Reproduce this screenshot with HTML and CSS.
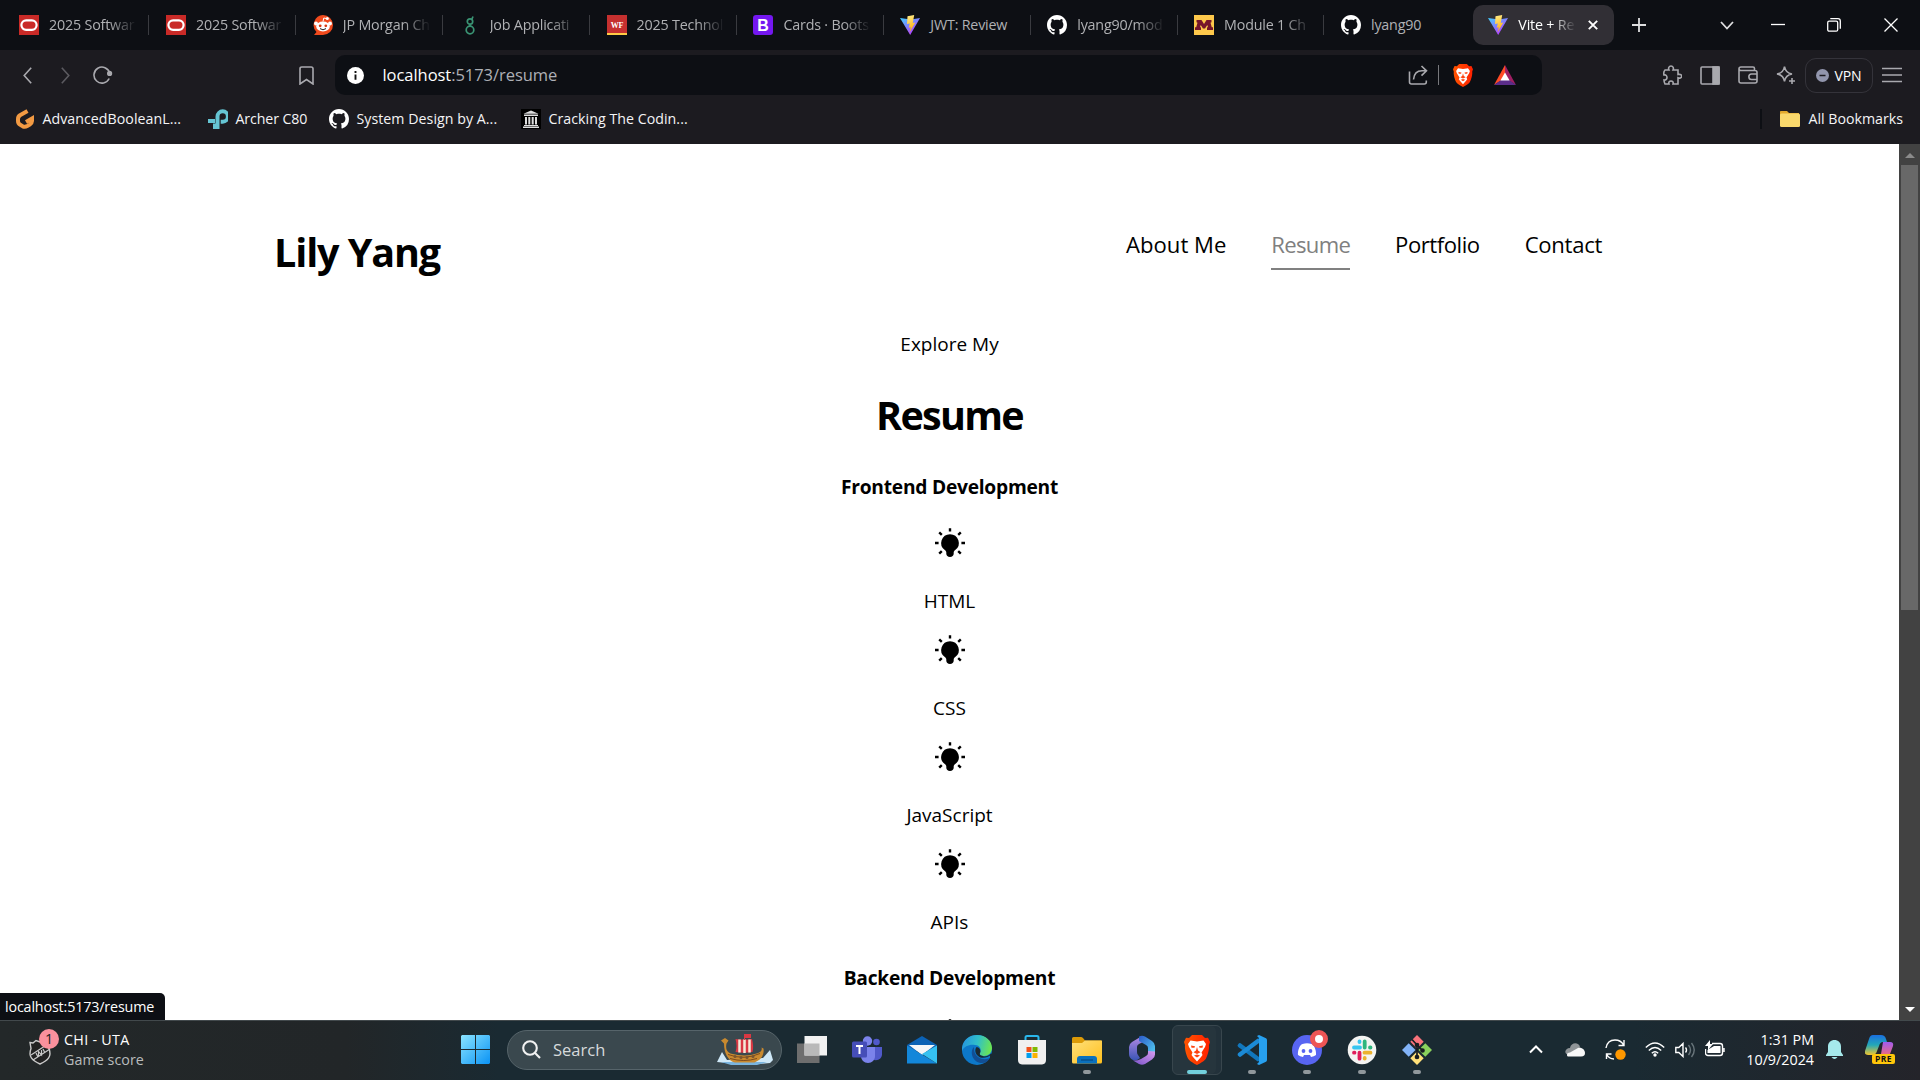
FILE: index.html
```html
<!DOCTYPE html>
<html lang="en">
<head>
<meta charset="utf-8">
<title>Vite + React</title>
<link rel="stylesheet" href="styles.css">
</head>
<body>
<svg class="defs" aria-hidden="true">
  <defs>
    <linearGradient id="vite-a" x1="0" y1="0" x2=".7" y2="1"><stop offset="0" stop-color="#41d1ff"/><stop offset="1" stop-color="#bd34fe"/></linearGradient>
    <linearGradient id="vite-b" x1=".4" y1="0" x2=".6" y2="1"><stop offset="0" stop-color="#ffea83"/><stop offset="1" stop-color="#ffa800"/></linearGradient>
    <linearGradient id="brave-g" x1="0" x2="1"><stop offset="0" stop-color="#ff5500"/><stop offset="1" stop-color="#ff2000"/></linearGradient>
    <linearGradient id="win-g" x1="0" y1="0" x2="1" y2="1" ><stop offset="0" stop-color="#8be4ff"/><stop offset="1" stop-color="#0a93f5"/></linearGradient>
    <linearGradient id="edge-a" x1="0" y1=".3" x2="1" y2=".5"><stop offset="0" stop-color="#2594e0"/><stop offset=".5" stop-color="#30bfc9"/><stop offset="1" stop-color="#6ce650"/></linearGradient>
    <linearGradient id="m-a" x1="0" y1="0" x2="0" y2="1"><stop offset="0" stop-color="#b58ae6"/><stop offset="1" stop-color="#3a55b5"/></linearGradient>
    <linearGradient id="m-b" x1="0" y1="0" x2="1" y2="1"><stop offset="0" stop-color="#2c59c8"/><stop offset="1" stop-color="#55d5f5"/></linearGradient>
    <linearGradient id="m-c" x1="0" y1="1" x2="1" y2="0"><stop offset="0" stop-color="#7a53c9"/><stop offset="1" stop-color="#d69bee"/></linearGradient>
    <linearGradient id="folder-g" x1="0" y1="0" x2="1" y2="1"><stop offset="0" stop-color="#ffe07a"/><stop offset="1" stop-color="#ffc01e"/></linearGradient>
    <linearGradient id="cop-a" x1="0" y1="0" x2="0" y2="1"><stop offset="0" stop-color="#1a6fe0"/><stop offset=".5" stop-color="#23a8b8"/><stop offset="1" stop-color="#f3c52c"/></linearGradient>
    <linearGradient id="cop-b" x1="0" y1="0" x2="0" y2="1"><stop offset="0" stop-color="#a15bf0"/><stop offset="1" stop-color="#ff6f66"/></linearGradient>
    <symbol id="github" viewBox="0 0 16 16"><path fill="#fff" d="M8 0C3.58 0 0 3.58 0 8c0 3.54 2.29 6.53 5.47 7.59.4.07.55-.17.55-.38 0-.19-.01-.82-.01-1.49-2.01.37-2.53-.49-2.69-.94-.09-.23-.48-.94-.82-1.13-.28-.15-.68-.52-.01-.53.63-.01 1.08.58 1.23.82.72 1.21 1.87.87 2.33.66.07-.52.28-.87.51-1.07-1.78-.2-3.64-.89-3.64-3.95 0-.87.31-1.59.82-2.15-.08-.2-.36-1.02.08-2.12 0 0 .67-.21 2.2.82.64-.18 1.32-.27 2-.27s1.36.09 2 .27c1.53-1.04 2.2-.82 2.2-.82.44 1.1.16 1.92.08 2.12.51.56.82 1.27.82 2.15 0 3.07-1.87 3.75-3.65 3.95.29.25.54.73.54 1.48 0 1.07-.01 1.93-.01 2.2 0 .21.15.46.55.38A8.01 8.01 0 0 0 16 8c0-4.42-3.58-8-8-8z"/></symbol>
    <symbol id="vite" viewBox="0 0 20 20"><path fill="url(#vite-a)" d="M0 3 10.200 20 20 3l-9 1.500z"/><path fill="url(#vite-b)" d="M14.200 0 7.500 1.300 7 9l2.800-.6-1 4.300 2-.5-1.300 5.300 5.800-10-2.500.5z"/></symbol>
    <symbol id="bulb" viewBox="0 0 30 30"><path d="M15 6.200a8.800 8.800 0 0 0-5.200 15.900c.9.700 1.500 1.500 1.500 2.500v1.200c0 2 1.500 3.200 3.700 3.200s3.700-1.200 3.700-3.200v-1.200c0-1 .6-1.800 1.500-2.500A8.800 8.800 0 0 0 15 6.200z"/><path stroke="#000" stroke-width="2.400" d="M15 .2v3.400M0 15h3.600M26.400 15H30M4.200 4.400l2.600 2.400M25.800 4.400l-2.600 2.400M4.200 25.600l2.600-2.400M25.800 25.600l-2.600-2.400"/></symbol>
    <symbol id="brave" viewBox="0 0 26 30"><path fill="url(#brave-g)" d="M8 0h10l3 3 3-.3 2 4.300-1 3c.6 4-1.500 10.500-3 13.500-1 2-5 4.500-9 6.500-4-2-8-4.500-9-6.500C2.500 20.500.4 14 1 10L0 7l2-4.300L5 3z"/><path fill="#fff" d="M6.500 5.500 13 6.500l6.500-1L22 9l-1 3-3.500 5.500 1 2.500-1.500 2-4 4.500L9 22l-1.500-2 1-2.500L5 12 4 9z"/><path fill="#ff4310" d="m7 10.500 4 .7-.5 1.600-3 0zm12 0-4 .7.5 1.600 3 0zM13 12l1 3.500 2.500 1.800L13 19l-3.500-1.700L12 15.500zM10 20.500l3-1 3 1-3 2z"/></symbol>
    <symbol id="oracle" viewBox="0 0 20 20"><path fill="#c92a27" d="M0 0h20v20H0z"/><rect x="2.400" y="5.400" width="15.200" height="9.400" rx="4.700" fill="none" stroke="#fff" stroke-width="2.200"/></symbol>
  </defs>
</svg>

<header class="browser">
  <div class="tabstrip">
    <div class="tab"><svg class="ico"><use href="#oracle"/></svg><span class="fade">2025 Softwar</span></div>
    <div class="tab"><svg class="ico"><use href="#oracle"/></svg><span class="fade">2025 Softwar</span></div>
    <div class="tab"><svg class="ico" viewBox="0 0 20 20"><path fill="#f04a1d" d="M10 0a10 10 0 0 1 0 20H1l2.500-3A10 10 0 0 1 10 0z"/><circle cx="3" cy="8.500" r="2" fill="#fff"/><circle cx="17" cy="8.500" r="2" fill="#fff"/><ellipse cx="10" cy="11.500" rx="6.800" ry="5" fill="#fff"/><circle cx="7.200" cy="10.800" r="1.400" fill="#d93a12"/><circle cx="12.800" cy="10.800" r="1.400" fill="#d93a12"/><path d="M7 13.600q3 2.400 6 0" stroke="#222" fill="none"/><path d="m10 6.500.8-3.500 3 .6" stroke="#fff" fill="none"/><circle cx="14.300" cy="3.600" r="1.500" fill="#fff"/></svg><span class="fade">JP Morgan Ch</span></div>
    <div class="tab"><svg class="ico" viewBox="0 0 20 20"><g fill="none" stroke="#3a9474" stroke-width="1.700"><circle cx="10" cy="6.500" r="2.700"/><circle cx="10" cy="15" r="3.800"/><path d="M10 9.200v2M11.800 4.500l1.200-3"/></g></svg><span class="fade">Job Applicati</span></div>
    <div class="tab"><svg class="ico" viewBox="0 0 20 20"><path fill="#c5302f" d="M0 0h20v20H0z"/><path fill="#ffcb45" d="M0 18h20v2H0z"/><text x="10" y="13" class="wf">WF</text></svg><span class="fade">2025 Technol</span></div>
    <div class="tab"><svg class="ico" viewBox="0 0 20 20"><rect width="20" height="20" rx="3" fill="#7417f0"/><text x="10" y="16" class="bs">B</text></svg><span class="fade">Cards · Boots</span></div>
    <div class="tab"><svg class="ico"><use href="#vite"/></svg><span class="whole">JWT: Review</span></div>
    <div class="tab"><svg class="ico"><use href="#github"/></svg><span class="fade">lyang90/mod</span></div>
    <div class="tab"><svg class="ico" viewBox="0 0 20 20"><path fill="#fdc84b" d="M0 0h20v20H0z"/><path fill="#76152b" d="M2.500 5h5L10 9l2.500-4h5v2.300l-1 .5 1.300 4.500H19V15h-6v-2.700h1l-.7-2.300L11 13.500H9L6.700 10 6 12.300h1V15H1v-2.700h1.200l1.300-4.500-1-.5z"/></svg><span class="fade">Module 1 Ch</span></div>
    <div class="tab last"><svg class="ico"><use href="#github"/></svg><span class="whole">lyang90</span></div>
    <div class="tab active"><svg class="ico"><use href="#vite"/></svg><span class="fade">Vite + Re</span><svg class="close" viewBox="0 0 10 10"><path d="m.8.8 8.400 8.400M9.200.8.8 9.200"/></svg></div>
    <svg class="plus line" viewBox="0 0 14 14"><path d="M7 0v14M0 7h14"/></svg>
    <div class="winctl">
      <svg class="line" width="14" height="9" viewBox="0 0 14 9"><path d="m1 1 6 6.500L13 1"/></svg>
      <svg class="line thin" width="14" height="14" viewBox="0 0 14 14"><path d="M0 6.500h14"/></svg>
      <svg class="line thin" width="14" height="14" viewBox="0 0 14 14"><rect x=".7" y="3.200" width="10" height="10" rx="1.500"/><path d="M3.300.7H11a2.300 2.300 0 0 1 2.300 2.300v7.700"/></svg>
      <svg class="line thin" width="14" height="14" viewBox="0 0 14 14"><path d="m.5.500 13 13M13.500.5l-13 13"/></svg>
    </div>
  </div>

  <div class="toolbar">
    <div class="nav-left">
      <svg class="tool" width="9" height="17" viewBox="0 0 9 17"><path d="M8.200.7 1.200 8.500l7 7.800"/></svg>
      <svg class="tool dim" width="9" height="17" viewBox="0 0 9 17"><path d="m.8.700 7 7.800-7 7.800"/></svg>
      <svg class="tool reload" width="20" height="19" viewBox="0 0 20 19"><path d="M16.200 12.500a8 8 0 1 1 .5-5.500"/><circle cx="16.600" cy="7.400" r="1.800" fill="#a9a9ae"/></svg>
      <svg class="tool mark" width="15" height="19" viewBox="0 0 15 19"><path d="M1 2.800C1 1.600 1.700 1 2.800 1h9.400C13.300 1 14 1.600 14 2.800V18l-6.500-4.500L1 18z"/></svg>
    </div>
    <div class="urlbar">
      <svg width="17" height="17" viewBox="0 0 17 17"><circle cx="8.500" cy="8.500" r="8.500" fill="#fff"/><path stroke="#111" stroke-width="1.900" d="M8.500 7.400v5.300M8.500 4v2"/></svg>
      <span class="url"><b>localhost</b>:5173/resume</span>
      <svg class="tool share" width="20" height="20" viewBox="0 0 20 20"><path d="M1.500 6.500V17c0 1.300.7 2 2 2h12.800c1.300 0 2-.7 2-2v-1.500M5.500 14.500C6 9 9 5.800 14 5.800h4M13.500 1l5 4.800-5 4.800"/></svg>
      <i class="vbar"></i>
      <svg width="20" height="23"><use href="#brave"/></svg>
      <svg class="bat" width="22" height="20" viewBox="0 0 22 20"><path fill="#ff4b26" d="M11 0 0 20l11-7z"/><path fill="#9e1f63" d="m11 0 11 20-11-7z"/><path fill="#5b2d8a" d="m0 20 7-5h8l7 5z"/><path fill="#fff" d="m11 7.500 4.600 8H6.400z"/></svg>
    </div>
    <div class="ext">
      <svg class="tool" width="20" height="20" viewBox="0 0 20 20"><path d="M3 5h4c-1-2 0-4 2-4s3 2 2 4h5v4.500c3-.6 4 .8 3.700 2-.3 1.500-2 2-3.700 1.300V19h-5c.6-2-.4-3-2-3s-2.600 1-2 3H3c-1-2-1-3.500-1-4 2 .3 3-1 3-2.500S4 9.500 2 10c-.5-2 0-4 1-5z"/></svg>
      <svg class="tool" width="20" height="19" viewBox="0 0 20 19"><rect x="1" y="1" width="18" height="17" rx="1"/><path fill="#a9a9ae" d="M13 1h6v17h-6z"/></svg>
      <svg class="tool" width="20" height="18" viewBox="0 0 20 18"><path d="M16.500 4.500V2.500c0-.8-.6-1.500-1.500-1.500H3C1.800 1 1 1.800 1 2.800S1.800 4.500 3 4.500h14c1.200 0 2 .8 2 2V15c0 1.200-.8 2-2 2H3c-1.200 0-2-.8-2-2V2.800M19 8h-5.500c-3.500 0-3.500 5.500 0 5.500H19"/></svg>
      <svg class="tool" width="20" height="20" viewBox="0 0 20 20"><path d="M8.500 1.500q1 6.500 7.500 7.500-6.500 1-7.500 7.500Q7.500 10 1 9q6.500-1 7.500-7.500zM16 13v6M13 16h6"/></svg>
      <span class="vpn"><svg width="13" height="13" viewBox="0 0 13 13"><circle cx="6.500" cy="6.500" r="6.500" fill="#9296ad"/><path stroke="#1c1b20" stroke-width="1.500" d="M3.500 6.500h6"/></svg>VPN</span>
      <svg class="tool" width="20" height="16" viewBox="0 0 20 16"><path d="M0 1.500h20M0 8h20M0 14.500h20"/></svg>
    </div>
  </div>

  <div class="bookmarks">
    <a class="bm b1"><svg class="ico" viewBox="0 0 20 20"><path fill="none" stroke="#f29a43" stroke-width="4" d="M12.500 2 5 6.200Q3 7.500 3 10v2c0 2 .8 3 2.200 3.800l2.500 1.500q2.300 1 4.500-.2l2.500-1.500Q17 14 17 12V9.500l-6 3.500"/></svg><span>AdvancedBooleanL...</span></a>
    <a class="bm b2"><svg class="ico" viewBox="0 0 20 20"><path fill="none" stroke="#65c5d3" stroke-width="4" d="M0 12h7M9.500 20V7.500a5.200 5.200 0 1 1 5.200 5.200h-2"/><path fill="#65c5d3" d="M5 14.500h6V20H5z"/></svg><span>Archer C80</span></a>
    <a class="bm b3"><svg class="ico"><use href="#github"/></svg><span>System Design by A...</span></a>
    <a class="bm b4"><svg class="ico" viewBox="0 0 20 20"><path d="M0 0h20v20H0z"/><path fill="#ddd" d="m10 1.500 7.500 3.300H2.500zM3 5.500h14V7H3zM4 8h2v7.500H4zM7.300 8h2v7.500h-2zM10.700 8h2v7.500h-2zM14 8h2v7.500h-2zM3 16h14v1H3zM2 17.500h16V19H2z"/></svg><span>Cracking The Codin...</span></a>
    <span class="allbm"><svg width="20" height="16" viewBox="0 0 20 16"><path fill="#e2a92c" d="M0 1c0-.6.400-1 1-1h6l2 2h10v6H0z"/><rect y="2.500" width="20" height="13.500" rx="1.500" fill="#f9d86c"/></svg><span>All Bookmarks</span></span>
  </div>
</header>

<main class="viewport">
  <div class="page">
    <div class="site-head">
      <h1>Lily Yang</h1>
      <nav><a class="n1">About Me</a><a class="n2 current">Resume</a><a class="n3">Portfolio</a><a class="n4">Contact</a></nav>
    </div>
    <section class="resume">
      <p class="intro">Explore My</p>
      <h2>Resume</h2>
      <h3>Frontend Development</h3>
      <div class="skill"><svg><use href="#bulb"/></svg><p>HTML</p></div>
      <div class="skill"><svg><use href="#bulb"/></svg><p>CSS</p></div>
      <div class="skill"><svg><use href="#bulb"/></svg><p>JavaScript</p></div>
      <div class="skill"><svg><use href="#bulb"/></svg><p>APIs</p></div>
      <h3 class="back">Backend Development</h3>
      <div class="skill"><svg><use href="#bulb"/></svg></div>
    </section>
  </div>
  <div class="scrollbar"><i class="up"></i><i class="thumb"></i><i class="down"></i></div>
  <div class="status">localhost:5173/resume</div>
</main>

<footer class="taskbar">
  <div class="widget">
    <span class="nhl"><svg width="24" height="26" viewBox="0 0 24 26"><path fill="#222" stroke="#c9c9c9" stroke-width="1.400" d="M2 3.500 5 4l3-2.500L12 3l4-1.500L19 4l3-.5-1 6c3 8-1 12-9 15.500C4 21.500 0 17.500 3 9.500z"/><path stroke="#c9c9c9" stroke-width="1.200" d="m3 16 17-11M5 21 22 10M8 14l2 4M10.500 17.500v-5l3 3.500v-5M15 10l2 4"/></svg><b>1</b></span>
    <div><p>CHI - UTA</p><p class="sub">Game score</p></div>
  </div>

  <div class="dock">
    <svg class="start" width="29" height="29" viewBox="0 0 29 29"><path fill="url(#win-g)" d="M1 0h13v14H0V1zM15 0h13l1 1v13H15zM0 15h14v14H1l-1-1zM15 15h14v13l-1 1H15z"/></svg>
    <div class="search">
      <svg width="19" height="19" viewBox="0 0 19 19"><circle cx="8" cy="8" r="6.800"/><path d="m12.800 12.800 5.200 5.200"/></svg>
      <span>Search</span>
      <svg class="ship" width="56" height="32" viewBox="0 0 56 32"><path fill="#cfe8f7" d="m0 28 5-10 5 8 36-2 7-8 3 10-3 3-24 2z"/><path fill="#7ab5df" d="M4 28h46l-10 3H14z"/><path fill="#c98a2f" d="M4 6.500 8 4l3.500 2.500-2 3c-1 5 0 8 4 10q15 4 26 0c4-1 6-3 5-6l2 1c1 7-3 12-9 14H18C11 27 7 19 7 9.500z"/><path stroke="#7c4a1c" d="M11 20.500q16 6 32-1M13 24.500q14 4 27 0" fill="none"/><path fill="#d93843" d="M18.500 5q8 1 16.500 0 2 8 .5 13-8.500 1.500-17 0 2-6 0-13z"/><path stroke="#f4ead9" stroke-width="2.500" d="M22.500 5.500v13M27.500 5.500v13.500M32.500 5.500v13"/><path fill="#d93843" d="M27 0h7v4h-6v2h-1z"/><g fill="#7a5630"><circle cx="18" cy="22.500" r="1.500"/><circle cx="24" cy="23.500" r="1.500"/><circle cx="30" cy="23.500" r="1.500"/><circle cx="36" cy="22.500" r="1.500"/></g></svg>
    </div>
    <div class="app"><svg viewBox="0 0 30 30"><path fill="#6e6e6e" d="M0 8.500h22.500V28H0z"/><path fill="#f2f2f2" d="M7.500 1H30v19.500H7.500z"/><path fill="#b9b9b9" d="M7.500 8.500h15v12h-15z"/></svg></div>
    <div class="app"><svg viewBox="0 0 30 30"><circle cx="24.500" cy="7" r="3.300" fill="#5059c9"/><circle cx="15.500" cy="6" r="4.700" fill="#7b83eb"/><path fill="#5059c9" d="M19 12h11v8q-1 6-8 5z"/><path fill="#7b83eb" d="M9 12h14v9c0 4-3 7-7 7s-7-3-7-7z"/><rect y="6.500" width="15" height="16" rx="1.500" fill="#464eb8"/><path stroke="#fff" stroke-width="2" d="M4 11h7M7.500 11v8"/></svg></div>
    <div class="app"><svg viewBox="0 0 30 30"><path fill="#0b62b5" d="M0 10 15 1l15 9-3 6H3z"/><path fill="#f4f6f8" d="M2 10h26L15 20z"/><path fill="#1387da" d="M0 10.500 30 28.500H0z"/><path fill="#35c1f1" d="M30 10.500v18L15 19z"/></svg></div>
    <div class="app"><svg viewBox="0 0 30 30"><circle cx="15" cy="15" r="15" fill="#0d78c9"/><path fill="url(#edge-a)" d="M0 13C1 4 8 0 15 0c9 0 15 6 15 13 0 5-4 8-8 8-3 0-5-1-4-3 2-3 0-8-5-8-5-1-11 1-13 6z"/><path fill="#124f94" d="M12 12c-5 5-1 16 8 16 4 0 6-2 8-5-3 1.500-8 2-12-1-4-3-4-7-4-10z"/><path fill="#1a2a32" d="M14.500 12c-3 4 0 9 4 10.500 4 1 8-.5 9.500-2v3l4 0v-4l-3-1c-2 2-4 3-7 3-3-1-5-1-4-3.500 1-2 0-6-3.500-6z"/></svg></div>
    <div class="app"><svg viewBox="0 0 30 30"><path fill="none" stroke="#29b7ec" stroke-width="2" d="M8.500 7V2.500c0-1 .5-1.500 1.500-1.500h10c1 0 1.500.5 1.500 1.500V7"/><path fill="#f0f0f0" d="M1 5h28v20q0 4-4 4.500H5Q1 29 1 25z"/><path fill="#f1511b" d="M9.500 12h5v5h-5z"/><path fill="#80b900" d="M15.500 12h5v5h-5z"/><path fill="#009fee" d="M9.500 18h5v5h-5z"/><path fill="#fbb300" d="M15.500 18h5v5h-5z"/></svg></div>
    <div class="app run"><svg viewBox="0 0 30 30"><path fill="#dc9a07" d="M0 3.500Q0 2 1.500 2H9q1 0 2 1l2 2.500h16V12H0z"/><path fill="url(#folder-g)" d="M0 8h10l3-2.500h17V27q0 1.500-1.500 1.500h-27Q0 28.500 0 27z"/><path fill="#0b71bd" d="M5 28.500V24q0-3 3-3h14q3 0 3 3v4.500z"/><path stroke="#084c87" stroke-width="1.300" d="M9 25h12"/></svg></div>
    <div class="app"><svg viewBox="0 0 30 30"><path fill="url(#m-a)" d="m15 1-10 6q-3 2-3 5v7q0 4 4 6 4 1 7-2l-2-3q-1-1-1-3v-5q0-2 2-3l6-3z"/><path fill="url(#m-b)" d="M12 1.500q3-1.500 6 0l7 4.500q3 2 3 5v7q0 2-2 3l-5-2v-6q0-2-2-3l-7-4z"/><path fill="url(#m-c)" d="M21 16v2q0 2-2 3l-5 3q-4 2-8 1.500l6 3.500q3 1.500 6 0l7-4.500q3-2 3-5v-3z"/></svg></div>
    <div class="app run sel"><svg viewBox="0 0 26 30"><use href="#brave"/></svg></div>
    <div class="app run"><svg viewBox="0 0 30 30"><path stroke="#1177bd" stroke-width="4.500" stroke-linejoin="round" stroke-linecap="round" d="M3 10.500 21 24"/><path stroke="#1b8ad6" stroke-width="4.500" stroke-linecap="round" d="M3 19.500 21 6"/><path fill="#27a0ef" d="m22 0 7 3.300q1 .7 1 2v19.400q0 1.300-1 2L22 30l-2-1 2-2V3l-2-2z"/></svg></div>
    <div class="app run"><svg viewBox="0 0 30 30"><circle cx="15" cy="15" r="15" fill="#5865f2"/><path fill="#fff" d="M10.500 9q4.500-1.300 9 0c3 1 5 7 4.500 11q-2 1.700-5 2l-1-2h-6l-1 2q-3-.3-5-2C5.500 16 7.500 10 10.500 9z"/><circle cx="11.500" cy="16" r="1.900" fill="#5865f2"/><circle cx="18.500" cy="16" r="1.900" fill="#5865f2"/></svg><i class="dot"></i></div>
    <div class="app run"><svg viewBox="0 0 30 30"><circle cx="15" cy="15" r="14.300" fill="#f4f4f2"/><g stroke-width="3.800" stroke-linecap="round"><path stroke="#36c5f0" d="M7 12.500h6M12.500 6.500v.5"/><path stroke="#2eb67d" d="M17.700 6.500v6M23 12.500h.5"/><path stroke="#ecb22e" d="M17.500 17.700h6M17.700 23v.5"/><path stroke="#e01e5a" d="M12.500 17.700v6M7 17.700h.5"/></g></svg></div>
    <div class="app run"><svg viewBox="0 0 30 30"><path fill="#f9737b" d="m15 0 6.700 6.700L15 13.500 8.300 6.700z"/><path fill="#83b4f8" d="m6.700 8.300 6.800 6.700-6.800 6.700L0 15z"/><path fill="#8ad15c" d="M23.300 8.300 30 15l-6.700 6.700-6.800-6.700z"/><path fill="#ffe079" d="m15 16.500 6.700 6.800L15 30l-6.700-6.700z"/><g stroke="#181d20" stroke-width="1.700"><path fill="none" d="M10 4.500 15 10v12M15 10l5 5"/><g fill="#181d20"><circle cx="15" cy="10" r="1.500"/><circle cx="15" cy="22" r="1.500"/><circle cx="20.500" cy="15.500" r="1.500"/></g></g></svg></div>
  </div>

  <div class="tray">
    <svg width="14" height="9" viewBox="0 0 14 9"><path class="st bold" d="m1 7.500 6-6 6 6"/></svg>
    <svg width="20" height="14" viewBox="0 0 20 14"><path fill="#8f9497" d="M5 5c1-6 9-6 10-1l-3 5-8 3C-2 11 0 5 5 5z"/><path fill="#f8f8f8" d="M2 12c0-2 1-2 3-2.500L13 5c4-1 7 2 7 5 0 2-1 3.500-4 3.500H4C2.500 13.500 2 13 2 12z"/></svg>
    <svg width="21" height="21" viewBox="0 0 21 21"><path class="st" d="M1 9C2 3 6 1 10 1c4 0 7 2 8.500 5M19 1v5.500h-5.500M9 20c-3 0-6-2-7.500-5M1.500 20v-5h5"/><circle cx="15.500" cy="15.500" r="5.200" fill="#ff9800"/></svg>
    <svg width="20" height="15" viewBox="0 0 20 15"><path class="st" d="M.8 5.500q9.200-9 18.400 0M3.800 8.500q6.200-6 12.400 0M6.800 11.300q3.200-3 6.400 0"/><circle cx="10" cy="13" r="1.700" fill="#fff"/></svg>
    <svg width="20" height="16" viewBox="0 0 20 16"><path class="st" d="M.8 5.500h3L8 1.500v13l-4.200-4h-3zM10.500 5.500q2 2.500 0 5"/><path class="st mute" d="M13.500 3q4 5 0 10M16.500 1q5.500 7 0 14"/></svg>
    <svg class="bat-ico" width="20" height="17" viewBox="0 0 20 17"><path class="st" d="M7 3.500h8c1.500 0 2.500 1 2.500 2.500v7c0 1.500-1 2.500-2.500 2.500H3c-1.500 0-2.500-1-2.500-2.500V9M19 8v4"/><path fill="#fff" d="M9 6h6.500v7h-13V10zM5 0v4h3L3 10V6H0z"/></svg>
    <div class="clock"><p class="time">1:31 PM</p><p>10/9/2024</p></div>
    <svg width="17" height="20" viewBox="0 0 17 20"><path fill="#a5e9eb" d="M8.500 0C5 0 2 2.500 2 6.500V12L0 15v1h17v-1l-2-3V6.500C15 2.500 12 0 8.500 0zM5.500 17h6q-3 4-6 0z"/></svg>
    <div class="copilot"><svg width="29" height="24" viewBox="0 0 29 24"><path fill="url(#cop-a)" d="M8 0h8q4 0 5 4l1 3h-4q-3 0-4 4l-2 5q-1 4-5 4H3q-4 0-3-4L4 4q1-4 4-4z"/><path fill="url(#cop-b)" d="M18 7h7q4 0 3 4l-3 8q-1 4-5 4h-9q4 0 5-4z"/></svg><b>PRE</b></div>
  </div>
</footer>
</body>
</html>
```
FILE: styles.css
```css
* { box-sizing: border-box; margin: 0; padding: 0; }
body {
  width: 1920px; height: 1080px; overflow: hidden;
  display: flex; flex-direction: column;
  font-family: "Open Sans", "Noto Sans", sans-serif;
  background: #fff; color: #000;
}
svg { display: block; flex: none; }
.defs { position: absolute; width: 0; height: 0; }
.ico { width: 20px; height: 20px; }

/* browser chrome */
.browser { height: 144px; background: #1c1b20; color: #f4f4f6; }
.tabstrip { height: 50px; background: #0d0f14; display: flex; align-items: center; padding-left: 2.600px; }
.tab { width: 146.880px; height: 20px; flex: none; display: flex; align-items: center; gap: 10px; padding-left: 16.500px; border-right: 1.500px solid #3a3b40; font-size: 14.300px; letter-spacing: -.2px; color: #b0b1b4; }
.tab.last { border-right-color: transparent; }
.whole { white-space: nowrap; line-height: 20px; }
.fade { width: 94px; white-space: nowrap; line-height: 20px; -webkit-mask-image: linear-gradient(90deg, #000 60px, transparent 88px); mask-image: linear-gradient(90deg, #000 60px, transparent 88px); }
.tab.active { width: 141px; height: 40px; margin-left: 2px; padding-left: 15px; border: 0; border-radius: 10px; background: #312f35; color: #fff; }
.active .fade { width: 60px; -webkit-mask-image: linear-gradient(90deg, #000 34px, transparent 58px); mask-image: linear-gradient(90deg, #000 34px, transparent 58px); }
.close { width: 10px; height: 10px; stroke: #fff; stroke-width: 1.900; }
.line, .tool { fill: none; stroke: #dedee0; stroke-width: 1.800; }
.thin { stroke-width: 1.300; stroke: #fff; }
.plus { width: 14px; height: 14px; margin-left: 18px; }
.winctl { flex: 1; display: flex; justify-content: flex-end; align-items: center; gap: 43.300px; padding-right: 22px; }
.winctl svg:nth-child(1) { margin-right: -6.500px; }
.winctl svg:nth-child(2) { margin-right: -1.300px; }

.toolbar { height: 50px; display: flex; align-items: center; }
.tool { stroke: #a9a9ae; stroke-width: 1.600; }
.dim { stroke: #5b5a60; }
.nav-left { width: 335px; display: flex; align-items: center; padding-left: 23px; gap: 29px; }
.reload { margin-left: -6px; }
.mark { margin-left: auto; margin-right: 21px; }
.urlbar { width: 1207px; height: 40px; border-radius: 10px; background: #0d0f14; display: flex; align-items: center; padding: 0 26px 0 11.500px; }
.url { margin-left: 19px; padding-bottom: 2px; font-size: 16.500px; color: #aeb0b6; white-space: nowrap; letter-spacing: -.05px; }
.url b { font-weight: 400; color: #fff; }
.share { margin-left: auto; }
.vbar { width: 1.500px; height: 20px; background: #77787c; margin: 0 14px 0 9.500px; }
.bat { margin-left: 21px; }
.ext { flex: 1; display: flex; align-items: center; justify-content: flex-end; gap: 18px; padding-right: 18px; }
.vpn { width: 68px; height: 35px; border: 1.500px solid #34333a; border-radius: 11px; display: flex; align-items: center; justify-content: center; gap: 5px; font-size: 14px; letter-spacing: -.1px; margin: 0 -9px 0 -9px; color: #fff; }

.bookmarks { height: 38px; display: flex; align-items: center; font-size: 14.200px; padding: 0 17px 0 15px; white-space: nowrap; }
.bookmarks span > span, .bm span { padding-bottom: 2px; }
.bm { display: flex; align-items: center; gap: 7.500px; letter-spacing: .04px; }
.b1 { width: 193px; } .b2 { width: 121px; letter-spacing: -.1px; } .b3 { width: 192px; }
.allbm { margin-left: auto; height: 20px; padding-left: 18px; border-left: 2px solid #0d0f14; display: flex; align-items: center; gap: 8px; }

/* page */
.viewport { position: relative; height: 876px; display: flex; overflow: hidden; background: #fff; }
.page { width: 1899px; }
.site-head { display: flex; justify-content: space-between; padding: 80px 297px 0 274px; }
h1, h2 { font-size: 39.500px; line-height: 56px; font-weight: 700; }
h1 { letter-spacing: -1.100px; }
nav { display: flex; gap: 45px; font-size: 22.100px; padding-top: 2px; }
nav a { height: 44px; line-height: 36px; white-space: nowrap; }
.n2 { letter-spacing: -.7px; }
.n3 { letter-spacing: -.45px; }
.n4 { letter-spacing: -.3px; }
.current { color: #808080; border-bottom: 2px solid #808080; }
.resume { display: flex; flex-direction: column; align-items: center; font-size: 19px; }
.intro { margin-top: 49px; line-height: 30px; }
h2 { margin-top: 28px; letter-spacing: -1.700px; }
h3 { margin-top: 29px; font-size: 19.200px; line-height: 30px; margin-bottom: 26px; letter-spacing: -.24px; }
.skill { width: 100%; height: 107px; display: flex; flex-direction: column; align-items: center; }
.skill svg { width: 30px; height: 30px; margin-left: 1px; }
.skill p { line-height: 30px; margin-top: 28px; }
.back { margin-top: 7px; }
.scrollbar { width: 21px; background: #424242; display: flex; flex-direction: column; align-items: center; }
.up { border: 5px solid transparent; border-top: 0; border-bottom: 5px solid #8b8b8b; margin-top: 9px; }
.thumb { width: 17px; height: 445px; margin-top: 7px; background: #686868; }
.down { border: 5px solid transparent; border-bottom: 0; border-top: 5px solid #fff; margin-top: auto; margin-bottom: 8px; }
.status { position: absolute; left: 0; bottom: 0; width: 165px; height: 27px; background: #0d0f14; color: #fff; border-top-right-radius: 5px; font-size: 14.300px; line-height: 27px; padding-left: 5px; white-space: nowrap; letter-spacing: -.15px; }

/* taskbar */
.taskbar { height: 60px; display: flex; align-items: center; padding-bottom: 1.500px; border-top: 1px solid #42494c; background: linear-gradient(90deg, #232829, #222628 18%, #1a2a32 26%, #1a2a32 85%, #24242a); color: #fff; font-size: 14.300px; }
.widget { width: 449px; display: flex; align-items: center; gap: 5px; padding-left: 28px; line-height: 20px; }
.widget .sub { color: #b9bcbd; letter-spacing: .05px; }
.widget p:first-child { letter-spacing: .3px; }
.nhl { position: relative; width: 31px; padding-top: 4px; }
.nhl b { position: absolute; right: 0; top: -6px; width: 20px; height: 20px; border-radius: 50%; background: #fb919d; color: #222; font-weight: 400; text-align: center; }
.dock { display: flex; align-items: center; height: 57px; }
.start { margin-left: 12px; margin-right: 17px; }
.search { width: 275px; height: 40px; border-radius: 20px; border: 1px solid #56646a; background: #3a484e; display: flex; align-items: center; padding: 0 8px 0 14px; margin-right: 2.500px; font-size: 16.500px; color: #d6dadb; }
.search span { margin-left: 12px; }
.search svg { fill: none; stroke: #f2f2f2; stroke-width: 2.100; }
.search .ship { margin-left: auto; stroke: none; stroke-width: 1; }
.app { position: relative; width: 55px; height: 50px; display: flex; align-items: center; justify-content: center; }
.app svg { width: 30px; height: 30px; }
.run::after { content: ""; position: absolute; bottom: 1px; left: 23.500px; width: 8px; height: 4px; border-radius: 2px; background: #90989c; }
.sel::before { content: ""; position: absolute; inset: 0 3px 0 2px; border: 1px solid #38464d; border-radius: 6px; background: #26353d; box-shadow: inset -5px 0 0 #22313a; }
.sel svg { position: relative; }
.sel::after { width: 20px; left: 17.500px; background: #72d0dc; }
.dot { position: absolute; right: 7px; top: 5px; width: 18px; height: 18px; border-radius: 50%; border: 5px solid #ee5555; background: #fff; }
.tray { flex: 1; display: flex; align-items: center; justify-content: flex-end; padding-right: 25px; gap: 10px; }
.tray > svg:nth-child(1) { margin-right: 12.500px; }
.tray > svg:nth-child(2), .tray > svg:nth-child(3) { margin-right: 9.500px; }
.bat-ico { margin-bottom: 3px; }
.st { fill: none; stroke: #fff; stroke-width: 1.400; }
.bold { stroke-width: 2; }
.mute { stroke: #68747a; }
.clock { width: 79px; text-align: right; line-height: 20px; margin-right: 2px; white-space: nowrap; }
.copilot { position: relative; width: 30px; height: 29px; margin-left: 12px; }
.copilot b { position: absolute; right: 0; bottom: 0; width: 23px; height: 10px; border-radius: 2px; background: #ffc60a; color: #111; font-size: 8.500px; line-height: 10px; text-align: center; letter-spacing: .4px; }
.wf { font: 700 8px "Liberation Serif", serif; fill: #fff; text-anchor: middle; }
.bs { font: 700 16px "Liberation Sans", sans-serif; fill: #fff; text-anchor: middle; }
```
